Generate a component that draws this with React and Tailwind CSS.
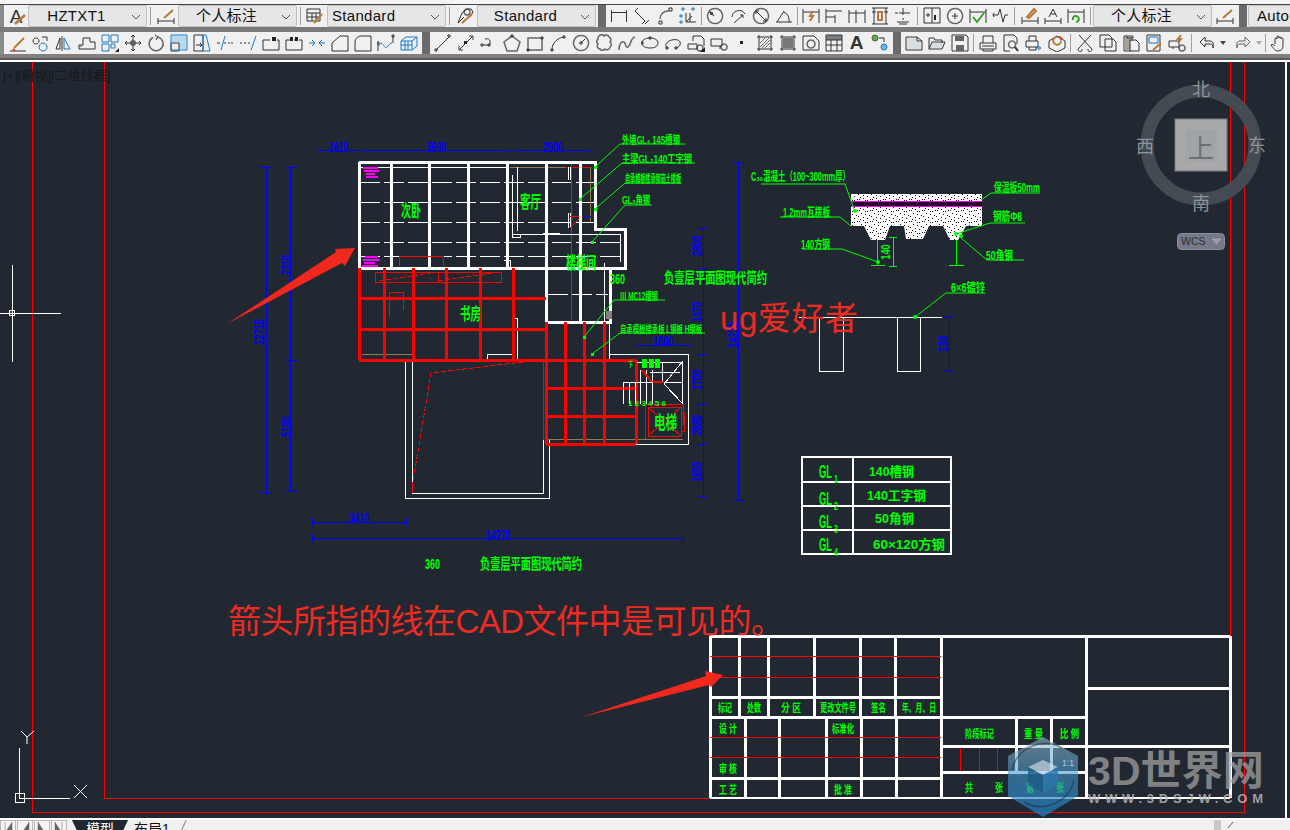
import React from 'react'

const GREEN = '#00ff00'
const BLUE = '#0000ff'
const RED = '#ff0000'
const sq = (x, y, s = 2) => `M${x} ${y}h${s}v${s}h-${s}z`

// d = dark strokes, b = blue strokes, o = tan strokes, g = grey, f = filled dark
const brush = 'M5 14L15 4'
const row1A = [
  { d: 'M1.5 3v12M16.5 3v12M1.5 5.5h15' },
  { d: 'M5 1l-3 3 3 3M2 4l10 10M12 17l4-4M9 17l3-3' },
  { g: 'M4 12a8 8 0 0 1 9-8', d: sq(3, 14, 3) + sq(13, 1, 3) },
  { b: sq(3, 1, 2) + sq(13, 1, 2) + sq(1, 8, 2) + sq(1, 14, 2), d: 'M7 15h10M11 15V6M7 6v9l6-6' },
]
const row1B = [
  { g: 'M9 1.5a7.5 7.5 0 1 0 .1 0M4 5l4 4', d: 'M4 5l3 1-2 2z' },
  { d: 'M3 10a7 7 0 0 1 13-3M5 16l9-8M11 8h3v3' },
  { g: 'M9 1.5a7.5 7.5 0 1 0 .1 0', d: 'M4 4l10 10M4 4h3M4 4v3M14 14h-3M14 14v-3' },
  { d: 'M1 15h16M2 15l7-11M9 5a9 9 0 0 1 5 10' },
]
const row1C = [
  { d: 'M1 2v14M17 2v14M1 5h16', o: 'M11 4l-3 5h3l-3 5' },
  { d: 'M1 2v14M1 4h16M1 10h9M1 16h0M10 8v8M1 8v0' },
  { d: 'M1 3v13M8 3v13M17 3v13M1 6h16' },
  { d: 'M1 1h16M1 17h16M3 1v16M15 1v16M1 5h4M13 5h4', o: 'M7 5h4v8H7z' },
  { d: 'M9 1v7M9 11v2M3 15h12M5 17h8M5 6h11M1 6h3' },
]
const row1D = [
  { d: 'M1 1h16v15H1zM9 1v15M3 8h4M5 6v4', f: 'M11 8h2v5h-2z' },
  { g: 'M9 1.5a7.5 7.5 0 1 0 .1 0', d: 'M9 6v6M6 9h6' },
  { d: 'M1 2v14M17 2v14M1 5h16', c: 'M4 10l4 5 7-9' },
  { d: 'M1 8h3M2 6l-1 2 1 2M4 8h2l2-6 3 13 2-7h3' },
]
const row1E = [
  { d: 'M1 10v7M17 10v7M1 14h16', o: 'M6 10L13 2l2 2-7 7z' },
  { d: 'M1 11v6M17 11v6M1 14h16M5 10L9 2l4 8M6.5 7h5' },
  { d: 'M1 2v14M17 2v14M1 5h16', c: 'M6 13a3 3 0 1 1 3 2' },
]
const row2A = [
  { o: brush, d: 'M1 17h16', r: 'M4 15l2 2' },
  { d: 'M4 4a3 3 0 1 0 .1 0M10 3h5M15 3v4', b: 'M11 9a4 4 0 1 0 .1 0' },
  { d: 'M7 2v15M5 4L1 15h4z', b: 'M9 4l6 11H9z' },
  { d: 'M1 15v-4h4V4h7v4h5v7zM3 13v-1', },
  { b: 'M1 1h7v7H1zM10 1h7v7h-7zM1 10h7v7H1zM10 10h4v4h-4z', f: 'M18 14v4h-4z' },
  { d: 'M9 1v16M1 9h16M7 3l2-2 2 2M7 15l2 2 2-2M3 7L1 9l2 2M15 7l2 2-2 2M7 7h4v4H7z' },
  { g: 'M11 3a7 7 0 1 1-5 0.5', d: 'M8 1l3 2-2 3' },
  { b: 'M1 1h16v15H1z', d: 'M1 9h8v8H1z', l: 'M2 2h14v13H9V8H2z' },
  { d: 'M1 1h9v16H1zM3 11h6M7 9l2 2-2 2', b: 'M10 1h3l4 16h-7z' },
  { b: 'M5 16L9 2', d: 'M1 9h3M8 9h2M12 9h2M15 9h2' },
  { d: 'M1 9h2M5 9h2M9 9h2', b: 'M12 16l5-14' },
  { d: 'M1 6v10h16V6M1 6h7M15 6h2', f: 'M10 3h4v4h-4z' },
  { d: 'M1 6v10h16V6M1 6h4M9 6h1M14 6h3', f: 'M5 3h3v4H5zM10 3h3v4h-3z' },
  { b: 'M1 9h6M11 9h6M4 6l3 3-3 3M14 6l-3 3 3 3' },
  { d: 'M1 17V9l8-7h8v15z' },
  { d: 'M1 17V8a6 6 0 0 1 6-6h10v15z' },
  { d: 'M1 17V10M16 2v7' + sq(0, 8) + sq(15, 1), b: 'M2 12c3-8 5 4 8 1s3-4 5-4' },
  { b: 'M1 7l5-4h11v9l-5 4H1zM1 7h11v9M12 7l5-4M5 7v9M8 7v9M1 11h11' },
]
const row2B = [
  { d: 'M2 16L15 3' + sq(1, 15) + sq(14, 1) },
  { d: 'M3 15L15 3M2 12v4h4M12 2h4v4', f: sq(7, 7, 3) },
  { d: 'M3 11h5a3 3 0 1 0-2-6h-1M3 11' + sq(1, 10) + sq(8, 10) },
  { g: 'M9 2l8 6-3 9H4L1 8z', d: sq(8, 1) },
  { g: 'M2 4h14v12H2z', d: sq(1, 15) + sq(15, 3) },
  { d: 'M3 16c0-7 5-12 12-13' + sq(2, 15) + sq(14, 2) },
  { g: 'M9 1.5a7.5 7.5 0 1 0 .1 0', d: 'M9 9l4-4' + sq(8, 8) },
  { g: 'M4 2a3 3 0 0 1 5 0a3 3 0 0 1 5 1a3 3 0 0 1 1 5a3 3 0 0 1 0 5a3 3 0 0 1-5 2a3 3 0 0 1-5 0a3 3 0 0 1-2-5a3 3 0 0 1 0-5a3 3 0 0 1 1-3z' },
  { g: 'M1 16c0-7 3-9 5-8s1 6 4 5 2-9 7-10' },
  { d: 'M9 4c5 0 8 2 8 5s-3 5-8 5-8-2-8-5 3-5 8-5z' + sq(8, 3) + sq(0, 8) },
  { d: 'M4 14c-3-1-3-5 1-7s10-2 11 1-1 5-4 6' + sq(2, 13) + sq(11, 13) },
  { d: 'M6 7V2h8l3 3v7M1 10h9v5H1z', g: 'M13 11a3 3 0 1 0 .1 0', f: 'M18 13v5h-5z' },
  { d: 'M1 5h11v7H1zM10 12v3', g: 'M14 10a3 3 0 1 0 .1 0' },
  { f: sq(7, 7, 3), d: 'M8 8h1' },
  { d: 'M1 3h16M1 15h16M3 1v16M15 1v16', g: 'M4 13L13 4M6 14l8-8M4 9l5-5M9 14l5-5', w: 1 },
  { d: 'M1 3h16M1 15h16M3 1v16M15 1v16', hatch: true },
  { d: 'M1 2h11l5 5v9H1z', g: 'M9 6a4 4 0 1 0 .1 0' },
  { d: 'M1 1h16v16H1zM1 6h16M1 11h16M6 6v11M12 6v11', t: true },
]
const row3A = [
  { d: 'M1 3h11l5 4v9H1zM12 3v4h5', l2: 'M2 4h10v4h4v7H2z' },
  { d: 'M1 15V4h5l1 2h7v3M1 15l3-7h13l-3 7z', l2: 'M4 9h12l-2 5H2z' },
  { s: true, d: 'M1 1h14l2 2v14H1z' },
]
const row3B = [
  { d: 'M1 9h16v6H1zM4 9V2h10v7M4 15v2h10v-2M3 12h12' },
  { d: 'M2 1h10l3 3v6M2 1v16h6', b: '', g: 'M10 7a3.5 3.5 0 1 0 .1 0', e: 'M13 13l3 4' },
  { d: 'M1 7h12v6H1zM4 7V2h7v5M4 13v3h7v-3', b: 'M11 14h4M13 12l3 2-3 2' },
  { d: 'M1 7l8-5 8 5v7l-8 4-8-4z', o: 'M8 3a4 4 0 1 0 5 5', b: 'M13 8a4 4 0 0 0-5-5', r: 'M10 3a4 4 0 0 1 4 3' },
]
const row3C = [
  { d: 'M3 1l12 13M15 1L3 14M3 14a2 2 0 1 0 3 1M15 14a2 2 0 1 1-3 1' },
  { d: 'M1 1h9l3 3v9H1zM6 5h8l3 3v9H6z' },
  { d: 'M5 2H2v15h7M5 2h6v2H5zM8 6h6l3 3v8H8z', fg: 'M3 3h8v4H8v9H3z' },
  { d: 'M2 1h13v16H2z', b: 'M4 3h9v6H4z', o: 'M8 16L16 9' },
  { d: 'M1 7h10v6H1zM5 13v2', g: 'M14 11a3 3 0 1 0 .1 0', o: 'M13 1l-3 4h3l-3 4' },
]

function Icon({ i }) {
  return (
    <svg width="18" height="18" viewBox="0 0 18 18" fill="none" strokeWidth="1" className="block">
      {i.l && <path d={i.l} fill="#b7d9ee" />}
      {i.l2 && <path d={i.l2} fill="#d8dde2" />}
      {i.fg && <path d={i.fg} fill="#a8a095" />}
      {i.hatch && <rect x="4" y="4" width="10" height="10" fill="#777" />}
      {i.t && <rect x="1" y="1" width="16" height="5" fill="#7a8088" />}
      {i.g && <path d={i.g} stroke="#666" strokeWidth={i.w || 1.5} />}
      {i.d && <path d={i.d} stroke="#333" />}
      {i.b && <path d={i.b} stroke="#1978c8" />}
      {i.o && <path d={i.o} stroke="#b5793a" strokeWidth="2" />}
      {i.c && <path d={i.c} stroke="#3a9c2a" strokeWidth="2" />}
      {i.e && <path d={i.e} stroke="#333" strokeWidth="2" />}
      {i.r && <path d={i.r} stroke="#d8401a" strokeWidth="2" />}
      {i.f && <path d={i.f} fill="#222" />}
      {i.s && <path d="M4 2h9v5H4zM5 11h8v6H5z" fill="#666" />}
    </svg>
  )
}

const Cell = ({ i }) => (
  <div className="w-[23px] h-full flex items-center justify-center shrink-0">
    <Icon i={i} />
  </div>
)

const Cells = ({ list }) => list.map((i, n) => <Cell key={n} i={i} />)

const Sep = ({ w = 'w-[5px]' }) => (
  <div className={`${w} h-full flex items-center justify-center shrink-0`}>
    <div className="w-px h-[18px] bg-[#a0a0a0]" />
  </div>
)

const Grip = () => (
  <div className="w-[8px] h-full bg-[#6a6a6a] flex items-center justify-center shrink-0 ml-[2px] mr-[1px]">
    <div className="w-[3px] h-[15px] bg-[radial-gradient(#111_40%,transparent_45%)] bg-[length:1.5px_2px]" />
  </div>
)

const LightGrip = () => (
  <div className="w-[4px] h-full bg-[#8a8a8a] shrink-0 bg-[radial-gradient(#222_40%,transparent_45%)] bg-[length:2px_2px]" />
)

const Combo = ({ label, w = 'w-[119px]', left }) => (
  <div className={`${w} h-[22px] shrink-0 bg-[#e6e6e6] border border-[#c0c0c0] rounded-[2px] flex items-center text-[15px] text-[#111] ${left ? 'pl-[4px]' : 'justify-center pr-[22px]'} relative tracking-[0.3px]`}>
    {label}
    {w === 'w-[119px]' && (
      <svg width="10" height="6" viewBox="0 0 10 6" className="absolute right-[5px] top-[8px]" fill="none" stroke="#555">
        <path d="M1 1l4 4 4-4" />
      </svg>
    )}
  </div>
)

const StyleA = () => (
  <div className="w-[24px] h-full flex items-center justify-center shrink-0 relative">
    <span className="text-[19px] text-[#333] leading-none font-['Liberation_Sans']">A</span>
    <svg width="12" height="12" viewBox="0 0 12 12" className="absolute right-[2px] bottom-[2px]" fill="none"><path d="M1 11L11 2" stroke="#b5793a" strokeWidth="2.5" /></svg>
  </div>
)
const StyleDim = () => (
  <div className="w-[25px] h-full flex items-center justify-center shrink-0">
    <Icon i={{ d: 'M1 11v6M17 11v6M1 14h16', o: 'M7 11L16 3' }} />
  </div>
)
const StyleTable = () => (
  <div className="w-[24px] h-full flex items-center justify-center shrink-0">
    <Icon i={{ d: 'M1 2h13v12H1zM1 6h13M1 10h13M6 6v8M10 6v8', o: 'M8 16L16 7' }} />
  </div>
)
const StyleLeader = () => (
  <div className="w-[25px] h-full flex items-center justify-center shrink-0">
    <Icon i={{ d: 'M2 16l4-10 5-4h4l2 3-3 5M2 16l6-6', o: 'M6 16L16 7', g: 'M11 2a3 3 0 1 0 .1 0' }} />
  </div>
)

const Toolbars = () => (
  <div className="h-[62px] shrink-0 flex flex-col bg-[#6f6f6f]">
    <div className="h-[4px] bg-[#f4f4f4] shrink-0" />
    <div className="h-px bg-[#444] shrink-0" />
    <div className="h-[22px] shrink-0 bg-[#f0f0f0] flex items-center overflow-hidden">
      <LightGrip />
      <StyleA />
      <Combo label="HZTXT1" />
      <Sep w="w-[6px]" />
      <StyleDim />
      <Combo label="个人标注" />
      <Sep w="w-[6px]" />
      <StyleTable />
      <Combo label="Standard" left />
      <Sep w="w-[6px]" />
      <StyleLeader />
      <Combo label="Standard" />
      <Grip />
      <Cells list={row1A} />
      <Sep w="w-[4px]" />
      <Cells list={row1B} />
      <Sep w="w-[4px]" />
      <Cells list={row1C} />
      <Sep w="w-[6px]" />
      <Cells list={row1D} />
      <Sep w="w-[4px]" />
      <div className="w-[2px] shrink-0" />
      <Cells list={row1E} />
      <Sep w="w-[6px]" />
      <Combo label="个人标注" />
      <StyleDim />
      <Grip />
      <div className="w-[60px] h-[22px] shrink-0 bg-[#e6e6e6] border border-[#c0c0c0] rounded-[2px] flex items-center text-[15px] text-[#111] pl-[8px] tracking-[0.3px]">Auto</div>
    </div>
    <div className="h-[5px] shrink-0 bg-[#7a7a7a]" />
    <div className="h-[22px] shrink-0 bg-[#f0f0f0] flex items-center overflow-hidden">
      <LightGrip />
      <div className="w-[2px] shrink-0" />
      <Cells list={row2A} />
      <Grip />
      <Cells list={row2B} />
      <div className="w-[23px] h-full flex items-center justify-center shrink-0 text-[19px] font-bold text-[#333] font-['Liberation_Sans']">A</div>
      <div className="w-[23px] h-full flex items-center justify-center shrink-0">
        <svg width="18" height="18" viewBox="0 0 18 18" fill="none">
          <circle cx="4" cy="4" r="3" fill="#6aa84f" stroke="#3d6b2a" />
          <circle cx="13" cy="13" r="3" fill="#6fb7e8" stroke="#1978c8" />
          <path d="M8 4h5v4" stroke="#222" />
        </svg>
      </div>
      <Grip />
      <Cells list={row3A} />
      <Sep />
      <Cells list={row3B} />
      <Sep />
      <Cells list={row3C} />
      <Sep w="w-[7px]" />
      <Cell i={{ d: 'M7 3L2 8l5 5v-3h5c2 0 3 1 3 4 1-4 0-7-3-7H7z' }} />
      <div className="w-[9px] flex justify-center shrink-0"><div className="border-x-[3px] border-x-transparent border-t-[4px] border-t-[#444]" /></div>
      <div className="w-[4px] shrink-0" />
      <Cell i={{ g: 'M11 3l5 5-5 5v-3H6c-2 0-3 1-3 4-1-4 0-7 3-7h5z', w: 1 }} />
      <div className="w-[9px] flex justify-center shrink-0"><div className="border-x-[3px] border-x-transparent border-t-[4px] border-t-[#aaa]" /></div>
      <Sep w="w-[4px]" />
      <Cell i={{ d: 'M5 10V5a1 1 0 0 1 2 0V3a1 1 0 0 1 2 0v1a1 1 0 0 1 2 0v1a1 1 0 0 1 2 0v7c0 3-2 5-5 5-3 0-4-2-7-6 1-1 2-1 4 1' }} />
    </div>
    <div className="h-[4px] shrink-0 bg-[#808080]" />
    <div className="h-[2px] shrink-0 bg-[#5a5a5a]" />
    <div className="h-[2px] shrink-0 bg-white" />
  </div>
)

const L = ({ d, c = '#fff', w = 1, dash }) => (
  <path d={d} fill="none" stroke={c} strokeWidth={w} strokeDasharray={dash} />
)

// CAD text, squeezed to the width it has in the drawing
const T = ({ x, y, w, s = 10, c = GREEN, a = 'start', r, b = true, children }) => (
  <text
    x={x}
    y={y}
    fontSize={s}
    fill={c}
    textAnchor={a}
    fontWeight={b ? 700 : 400}
    textLength={w}
    lengthAdjust={w ? 'spacingAndGlyphs' : undefined}
    transform={r ? `rotate(-90 ${x} ${y})` : undefined}
  >
    {children}
  </text>
)

const DimV = ({ x, y, w, children }) => (
  <T x={x} y={y} w={w} s={14} c={BLUE} a="middle" r>{children}</T>
)

const Plan = () => (
  <g>
    <g shapeRendering="crispEdges">
      {/* blue dimension lines */}
      <L c={BLUE} d="M318 150H360M361 150H511M514 150H591M266 167V493M290.5 167V491M312 522H406M312 538H683M703 228V497M738.5 162V500M635 345H691M949 316V371" />
      <L c={BLUE} d="M285 167h12M260 167h12M285 360h12M285 491h12M260 493h12M698 228h10M698 268h10M698 354h10M698 404h10M698 444h10M698 497h10M734 162h10M734 500h10M312 518v8M406 518v8M312 534v8M683 534v8M944 316h10M944 371h10" />

      {/* dashed floor joists */}
      {[182, 202, 222, 242, 256].map((y) => (
        <L key={y} d={`M360 ${y}H${y > 230 ? 622 : 594}`} dash="20 4" w={1} />
      ))}
      <L d="M548 294H608" dash="20 4" />
      <L d="M360 167H507" />
      <L c="#8f7d50" d="M510 167H565M590 167V222M546 439H683M362 354H412" />
      <L c="#c800c8" d="M571.5 164V320" />
      <L c={RED} d="M565 167H590" />
      <L d="M512 175V237H520V234M517 167V231M568 167V180M570 167V180M568 213V228M570 213V228M512 234H620V262M543 233H560" />
      <L c={BLUE} d="M583 222V216H591V222" />
      <L c={RED} d="M570 216H583M570 228L582 216" />

      {/* white beams of the upper floor */}
      <L w={3} d="M359 162H595V229H625V268H359V162M391 162V268M429 162V268M468 162V268M507 162V268M546 162V322H610V270M580 162V322" />
      <L d="M503 267V270M504 260H510V268M604 263V330" />

      {/* lower outlines */}
      <L d="M405 360V498H549V440M412 360V493H543V440M487 360V354H512V318H517V360M609 322V354H688V444H636M609 354V360" />

      {/* magenta hatch */}
      <L c="#ff00ff" w={2} d="M363 168H378M364 171H379M366 174H375M366 177H378M365 257H378M363 260H379M364 263H375M362 266H378" />

      {/* thin red parts */}
      <L c={RED} d="M375 272H501V282H375ZM438 272V282M399 266V256H443V266M389 317V292H403V310M543 360V440" />
      <L c={RED} d="M379 281L436 272M438 281L498 272M412 487L431 373L523 362" dash="5 2" />
      <L c={RED} d="M412 493V485" />

      {/* red beams */}
      <L c={RED} w={3} d="M359 268V360M384 268V360M413 268V360M446 268V360M480 268V360M513 268V360M359 298H546M359 329H546M359 360H636M546 322V444M565 322V444M584 322V444M604 322V444M636 360V444M546 388H636M546 416H636M546 444H636" />

      {/* stairs + lift */}
      <L d="M637 362H682V404M623 404V382H636M629 382V404M635 382V404M640 370V404M646 370V404M652 370V404M662 362V382M636 382H682M650 372H680M630 382" />
      <L d="M683 361L664 384L683 404" />
      <L c={RED} d="M648 407H681V436H648ZM648 407L681 436M681 407L648 436M645 404V439M645 404H683V425M681 413H684V431H681" />
      <L c={RED} w={2} d="M642 370L652 382M653 382H664" />
    </g>

    <rect x="642" y="359" width="5" height="9" fill={GREEN} />
    <rect x="649" y="359" width="5" height="9" fill={GREEN} />
    <rect x="655" y="359" width="5" height="9" fill={GREEN} />

    {/* grey section marker */}
    <rect x="606" y="311" width="6" height="8" fill="#808080" />

    {/* dimension text */}
    <T x={329} y={152} w={19} s={14} c={BLUE}>1610</T>
    <T x={427} y={152} w={19} s={14} c={BLUE}>5690</T>
    <T x={543} y={152} w={20} s={14} c={BLUE}>2900</T>
    <DimV x={264} y={332} w={26}>12710</DimV>
    <DimV x={291} y={265} w={20}>7310</DimV>
    <DimV x={291} y={427} w={20}>5180</DimV>
    <DimV x={702} y={246} w={20}>2800</DimV>
    <DimV x={702} y={312} w={20}>1470</DimV>
    <DimV x={702} y={380} w={20}>1700</DimV>
    <DimV x={702} y={425} w={20}>2880</DimV>
    <DimV x={702} y={472} w={20}>1850</DimV>
    <DimV x={738} y={335} w={26}>14270</DimV>
    <DimV x={948} y={344} w={16}>130</DimV>
    <T x={663} y={346} w={20} s={14} c={BLUE} a="middle">1600</T>
    <T x={359} y={523} w={20} s={14} c={BLUE} a="middle">3410</T>
    <T x={498} y={540} w={24} s={14} c={BLUE} a="middle">14270</T>

    {/* room labels */}
    <T x={401} y={217} w={20} s={17}>次卧</T>
    <T x={520} y={208} w={21} s={17}>客厅</T>
    <T x={566} y={269} w={30} s={17}>楼梯间</T>
    <T x={460} y={320} w={21} s={17}>书房</T>
    <T x={654} y={429} w={23} s={18}>电梯</T>
    <T x={610} y={284} w={15} s={15}>360</T>
    <T x={664} y={283} w={103} s={15}>负壹层平面图现代简约</T>
    <T x={425} y={569} w={15} s={15}>360</T>
    <T x={480} y={569} w={102} s={15}>负壹层平面图现代简约</T>
    <T x={628} y={367} w={5} s={7}>下</T>
    <T x={628} y={406} w={38} s={8}>1 2 3 4 5 6</T>

    {/* leaders */}
    <g stroke={GREEN} fill="none" strokeWidth="1">
      <path d="M595 167L620 144H685M580 199L622 163H695M595 209L625 183H681M592 242L625 205H652M584 337L614 300H665M592 354L620 333H705" />
    </g>
    {[[595, 167], [580, 199], [595, 209], [592, 242], [584, 337], [592, 354]].map(([x, y]) => (
      <rect key={x + '' + y} x={x - 1} y={y - 1} width="3" height="3" fill={GREEN} />
    ))}
    <T x={622} y={144} w={58} s={11}>外墙GL₄ 14S槽钢</T>
    <T x={622} y={163} w={70} s={11}>主梁GL₂140工字钢</T>
    <T x={625} y={183} w={56} s={11}>自承模板楼承钢筋土楼板</T>
    <T x={622} y={204} w={28} s={11}>GL₃角钢</T>
    <T x={620} y={300} w={38} s={10}>Ⅲ MC12槽钢</T>
    <T x={620} y={333} w={82} s={10}>自承模板楼承板 L钢板 H钢板</T>
  </g>
)

const Detail = () => {
  const slab = 'M851 194H982V226H966L958 240H950L943 226H929L923 239H906L904 226H890L885 240H871L864 226H851Z'
  return (
    <g>
      <defs>
        <pattern id="speck" width="13" height="11" patternUnits="userSpaceOnUse">
          <rect width="13" height="11" fill="#fff" />
          {[[1, 1], [5, 0], [9, 2], [3, 4], [7, 5], [11, 6], [0, 7], [5, 8], [9, 9], [2, 10], [12, 1], [7, 2]].map(([x, y]) => (
            <rect key={x * 20 + y} x={x} y={y} width="1" height="1" fill="#111" />
          ))}
        </pattern>
      </defs>
      <path d={slab} fill="url(#speck)" />
      <g shapeRendering="crispEdges">
        <rect x="851" y="201" width="131" height="6" fill="#2a0530" />
        <L c="#ff00ff" d="M851 201H982M851 206H982" />
        <L c={GREEN} d="M877 240V265M871 265H885M956 240V265M949 265H964M893 237V266M889 237H897M889 266H897" />
        <L d="M799 317H942M819 317V371H843V317M897 317V371H920V317" />
      </g>
      <T x={890} y={252} w={15} s={12} r a="middle">140</T>
      <g stroke={GREEN} fill="none">
        <path d="M761 184H845L855 212M780 217H840L851 226M802 249H842L878 262M981 200L991 193H1040M956 234L990 223H1025M961 238L987 260H1024M915 317L946 293H985" />
      </g>
      {[[855, 211], [878, 262], [956, 234], [961, 236], [915, 317]].map(([x, y]) => (
        <circle key={x + y} cx={x} cy={y} r="2" fill={GREEN} />
      ))}
      <T x={751} y={181} w={99} s={12}>C₃₀混凝土（100~300mm厚）</T>
      <T x={783} y={217} w={47} s={12}>1.2mm瓦楞板</T>
      <T x={801} y={249} w={29} s={12}>140方钢</T>
      <T x={994} y={192} w={46} s={12}>保温板50mm</T>
      <T x={993} y={221} w={29} s={12}>钢筋Φ8</T>
      <T x={986} y={260} w={27} s={12}>50角钢</T>
      <T x={951} y={292} w={34} s={12}>6×6镀锌</T>
    </g>
  )
}

const GLRows = [
  ['1', '140槽钢', 869, 45, 478, 476],
  ['2', '140工字钢', 867, 59, 505, 500],
  ['3', '50角钢', 875, 39, 528, 523],
  ['4', '60×120方钢', 873, 72, 551, 549],
]

const GLTable = () => (
  <g>
    <g shapeRendering="crispEdges">
      <L w={2} d="M802 457H951V554H802ZM853 457V554M802 482H951M802 506H951M802 530H951" />
    </g>
    {GLRows.map(([n, label, x, w, gy, ly]) => (
      <g key={n}>
        <T x={819} y={gy} w={13} s={18}>GL</T>
        <T x={834} y={gy + 5} w={4} s={10}>{n}</T>
        <T x={x} y={ly} w={w} s={13}>{label}</T>
      </g>
    ))}
  </g>
)

const TitleBlock = () => (
  <g>
    <g shapeRendering="crispEdges">
      <L w={3} d="M710 636H1230M710 697H941.5M710 717H1086M710 778H941.5M941.5 746H1230M941.5 772H1086M1086 688H1230M739.5 636V717M768.5 636V717M814.5 636V717M860.5 636V717M895.5 636V717M941.5 636V798M1086 636V798M745 717V798M779 717V798M826.5 717V798M861 717V798M896 717V798M1016.5 717V772M1051.5 717V772M710 636V798M1230 636V798" />
      <L w={1.5} d="M710 798H1230" />
      <L c={RED} d="M710 656H941M710 677H941M710 737H941M710 757H941M960 748V771M979 748V771M997 748V771" />
    </g>
    {[
      ['标记', 718, 712, 14], ['处数', 747, 712, 14], ['分 区', 781, 712, 20], ['更改文件号', 820, 712, 36],
      ['签名', 871, 712, 15], ['年、月、日', 902, 712, 34], ['设 计', 719, 733, 18], ['标准化', 832, 733, 22],
      ['审 核', 719, 773, 18], ['工 艺', 719, 794, 18], ['批 准', 834, 794, 18], ['阶段标记', 965, 738, 29],
      ['重 量', 1024, 738, 19], ['比 例', 1060, 738, 19], ['共', 965, 792, 8], ['张', 995, 792, 8],
      ['第', 1026, 792, 8], ['张', 1056, 792, 8],
    ].map(([t, x, y, w]) => (
      <T key={t + x} x={x} y={y} w={w} s={11.5}>{t}</T>
    ))}
    <T x={1062} y={766} w={12} s={9.5} c="#fff" b={false}>1:1</T>
  </g>
)

const Frames = () => (
  <g shapeRendering="crispEdges">
    {/* outer + inner border of the sheet */}
    <rect x="32" y="62" width="1" height="751" fill={RED} />
    <rect x="32" y="812" width="1213" height="1" fill={RED} />
    <rect x="1244" y="62" width="1" height="751" fill={RED} />
    <rect x="104" y="62" width="1" height="737" fill={RED} />
    <rect x="104" y="798" width="1127" height="1" fill={RED} />
    <rect x="1230" y="62" width="1" height="737" fill={RED} />
    {/* crosshair */}
    <L d="M12.5 265V362M0 313.5H61M9.5 310.5h5v5h-5z" />
    {/* ucs icon */}
    <L d="M19.5 748V794M25 798.5H70M15.5 793.5h9v9h-9zM19.5 793.5v5h5" />
  </g>
)

const UcsGlyphs = () => (
  <g fill="none" stroke="#fff">
    <path d="M21 731L27 737L34 731M27 737V744M74 785L87 798M87 785L74 798" />
  </g>
)

const Compass = () => (
  <g>
    <circle cx="1201" cy="145" r="54" fill="none" stroke="#454b52" strokeWidth="13" />
    <rect x="1175" y="119" width="52" height="52" fill="#a9a9ab" stroke="#7a7d80" />
    <rect x="1185" y="129" width="32" height="32" fill="#9fa4a6" />
    <text x="1201" y="158" fontSize="26" fill="#6c7073" textAnchor="middle">上</text>
    {[['北', 1201, 96], ['南', 1201, 210], ['西', 1145, 153], ['东', 1257, 152]].map(([t, x, y]) => (
      <text key={t} x={x} y={y} fontSize="18" fill="#8f9398" textAnchor="middle">{t}</text>
    ))}
    <rect x="1177.5" y="233.5" width="47" height="16" rx="4" fill="#767a88" stroke="#8b8f9b" />
    <text x="1181" y="245" fontSize="10.5" fill="#2b2f36">WCS</text>
    <path d="M1212 239h9l-4.5 5z" fill="#9a9eaa" stroke="#b0b4be" strokeWidth="0.5" />
  </g>
)

const Notes = () => (
  <g>
    <polygon points="227,324 336,252 335,249 355,248 345,266 342,263" fill="#f0281e" />
    <polygon points="582,717 706,676 705,671 723,675 711,687 709,685" fill="#f0281e" />
    <text x="720" y="330" fontSize="33" fill="#ed2b22" textLength="138">ug爱好者</text>
    <text x="228" y="633" fontSize="33" fill="#ed2b22" textLength="556">箭头所指的线在CAD文件中是可见的。</text>
  </g>
)

const Watermark = () => (
  <g>
    <defs>
      <linearGradient id="hex" x1="0" y1="0" x2="0" y2="1">
        <stop offset="0" stopColor="#9fc0d6" stopOpacity="0.55" />
        <stop offset="0.5" stopColor="#3f94cc" stopOpacity="0.6" />
        <stop offset="1" stopColor="#1b7cc0" stopOpacity="0.75" />
      </linearGradient>
    </defs>
    <polygon points="1043,737 1078,756 1078,796 1043,817 1008,796 1008,756" fill="url(#hex)" />
    <path d="M1012 770a34 34 0 0 1 50-22M1074 780a34 34 0 0 1-50 22" fill="none" stroke="#202833" strokeOpacity="0.5" strokeWidth="1.5" />
    <polygon points="1028,767 1043,760 1058,767 1043,775" fill="#dfe8ee" fillOpacity="0.6" />
    <polygon points="1028,767 1043,775 1043,793 1028,785" fill="#1b5b86" fillOpacity="0.8" />
    <polygon points="1058,767 1043,775 1043,793 1058,785" fill="#2c78ad" fillOpacity="0.8" />
    <text x="1088" y="785" fontSize="41" fontWeight="700" fill="#a4a4a4" fillOpacity="0.72" textLength="176" lengthAdjust="spacingAndGlyphs">3D世界网</text>
    <text x="1088" y="803" fontSize="13" fontWeight="700" fill="#b4b4b4" fillOpacity="0.85" textLength="175">WWW.3DSJW.COM</text>
  </g>
)

const TabBar = () => (
  <div className="h-[10px] shrink-0 bg-[#f0f0f0] flex items-start overflow-hidden relative">
    {['M9 1v9L3 10M2 1v9', 'M9 1v9L3 10', 'M1 1v9L7 10', 'M1 1v9L7 10M8 1v9'].map((d, i) => (
      <div key={i} className="w-[16px] h-[12px] border border-[#b9b9b9] bg-[#f4f4f4] shrink-0 mr-[1px]">
        <svg width="14" height="10" viewBox="0 0 10 10"><path d={d} fill="#666" stroke="#666" strokeWidth="0.5" /></svg>
      </div>
    ))}
    <div className="w-[56px] h-[12px] bg-[#222831] text-white text-[14px] leading-[18px] text-center shrink-0 ml-[4px] [clip-path:polygon(0_0,100%_0,90%_100%,10%_100%)]">模型</div>
    <div className="text-[14px] leading-[18px] text-[#111] ml-[6px] shrink-0">布局1</div>
    <div className="w-px h-[12px] bg-[#888] rotate-[25deg] ml-[13px] shrink-0" />
    <div className="absolute left-[1214px] top-0 w-[7px] h-[10px] bg-[#c8c8c8]" />
    <svg width="8" height="10" viewBox="0 0 8 10" className="absolute left-[1227px] top-0" fill="none" stroke="#555"><path d="M1 8L6 2" /></svg>
  </div>
)

export default function App() {
  return (
    <div className="w-[1290px] h-[830px] overflow-hidden flex flex-col bg-[#222831] font-['Liberation_Sans','Noto_Sans_CJK_SC',sans-serif]">
      <Toolbars />
      <div className="flex-1 min-h-0 flex">
        <div className="w-[1285px] h-full relative">
          <svg viewBox="0 62 1285 756" width="1285" height="756" className="block">
            <Frames />
            <UcsGlyphs />
            <Plan />
            <Detail />
            <GLTable />
            <TitleBlock />
            <Compass />
            <Notes />
            <Watermark />
          </svg>
          <span className="absolute left-[3px] top-[7px] text-[13px] leading-none text-[#14181e]">[+][俯视][二维线框]</span>
        </div>
        <div className="w-[2px] bg-white shrink-0" />
      </div>
      <div className="h-[2px] bg-white shrink-0" />
      <TabBar />
    </div>
  )
}
